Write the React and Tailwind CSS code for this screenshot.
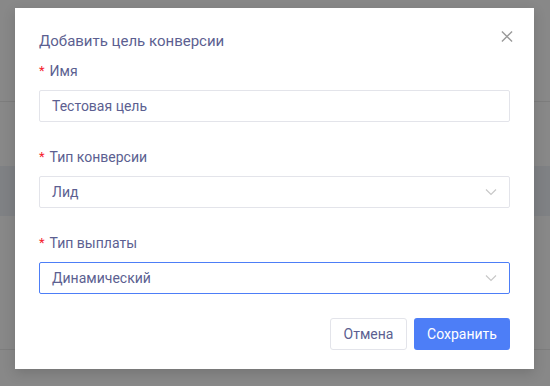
import React from "react";

function Chevron() {
  return (
    <svg width="12" height="8" viewBox="0 0 12 8" fill="none" className="shrink-0">
      <path d="M1 1.5 L6 6.5 L11 1.5" stroke="#c8c8c8" strokeWidth="1.2" />
    </svg>
  );
}

function Label({ children }) {
  return (
    <div className="h-5 flex items-center text-[14px] leading-5 text-[#5c5f91]">
      <span className="text-[#f5222d] mr-[5px] text-[13px]">*</span>
      {children}
    </div>
  );
}

export default function App() {
  return (
    <div
      className="relative w-[550px] h-[386px] bg-[#888888] overflow-hidden"
      style={{ fontFamily: "Roboto, 'Noto Sans', sans-serif" }}
    >
      <div className="absolute inset-0 flex flex-col pointer-events-none">
        <div className="h-[101px]" />
        <div className="h-px bg-[#7d7d7d]" />
        <div className="h-[64px]" />
        <div className="h-[50px] bg-[#7f8184]" />
        <div className="h-[133px]" />
        <div className="h-px bg-[#7d7d7d]" />
      </div>
      <div className="relative ml-[15px] mt-[8px] w-[519px] h-[361px] bg-white shadow-[0_4px_12px_rgba(0,0,0,0.15)] px-6 pt-[23px] flex flex-col">
        <button className="absolute right-[21px] top-[22px] w-3 h-3 flex items-center justify-center">
          <svg width="13" height="13" viewBox="0 0 13 13" fill="none">
            <path d="M1 1 L12 12 M12 1 L1 12" stroke="#9a9a9a" strokeWidth="1.5" />
          </svg>
        </button>
        <div className="h-5 flex items-center text-[15px] leading-5 text-[#5c5f91]">
          Добавить цель конверсии
        </div>
        <div className="mt-[10px]">
          <Label>Имя</Label>
        </div>
        <div className="mt-[9px] h-8 border border-[#e3e4ea] rounded-[2px] flex items-center px-3 text-[14px] text-[#5c5f91]">
          Тестовая цель
        </div>
        <div className="mt-[25px]">
          <Label>Тип конверсии</Label>
        </div>
        <div className="mt-[9px] h-8 border border-[#e3e4ea] rounded-[2px] flex items-center justify-between pl-3 pr-[12px] text-[14px] text-[#5c5f91]">
          <span>Лид</span>
          <Chevron />
        </div>
        <div className="mt-[25px]">
          <Label>Тип выплаты</Label>
        </div>
        <div className="mt-[9px] h-8 border border-[#4d7ef7] rounded-[2px] flex items-center justify-between pl-3 pr-[12px] text-[14px] text-[#5c5f91]">
          <span>Динамический</span>
          <Chevron />
        </div>
        <div className="mt-6 flex justify-end gap-[7px]">
          <button className="h-8 w-[77px] border border-[#e3e4ea] rounded-[3px] text-[14px] text-[#5c5f91] bg-white">
            Отмена
          </button>
          <button className="h-8 w-[96px] rounded-[3px] text-[14px] text-white bg-[#4d7ef7]">
            Сохранить
          </button>
        </div>
      </div>
    </div>
  );
}
